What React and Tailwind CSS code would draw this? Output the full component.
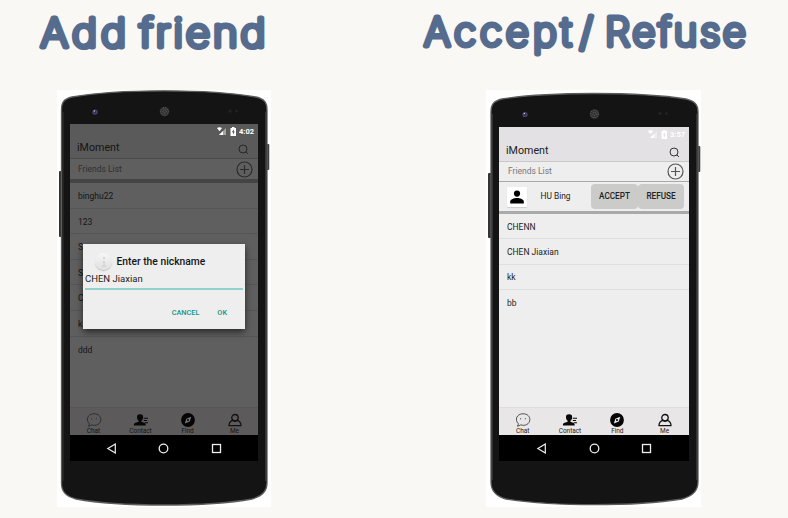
import React from "react";

function Heading({ words, y, width, label, stretch }) {
  return (
    <svg width={width} height="90" className="block overflow-visible" role="img" aria-label={label}>
      <text
        y={y}
        transform={`scale(${stretch} 1)`}
        className="fill-[#566c8f] stroke-[#566c8f] font-[Inter,sans-serif] font-extralight text-[39px]"
        strokeWidth="4.9"
        strokeLinejoin="round"
        strokeLinecap="round"
      >
        {words.map(([word, x, length]) => (
          <React.Fragment key={word}>
            <tspan x={x / stretch} textLength={length / stretch} lengthAdjust="spacing">{word}</tspan>{" "}
          </React.Fragment>
        ))}
      </text>
    </svg>
  );
}

function LeftBody() {
  return (
    <svg width="214" height="417" className="absolute inset-0">
      <rect x="2" y="81" width="4" height="66" rx="1" fill="#343434" />
      <rect x="209" y="54" width="3.3" height="26" rx="1" fill="#414141" />
      <path d="M4.5 20 C4.5 12 7 9 15 7 C40 2.500 75 .8 107 .8 C139 .8 174 2.500 199 7 C207 9 210 12 210 20 V393 C210 401 206 406 195 409 C170 413.500 140 415 107 415 C74 415 44 413.500 19 409 C8 406 4.500 401 4.500 393 Z" fill="#141414" stroke="#5c5c5c" strokeWidth="1.3" />
      <path d="M6 22 V391 M208.500 22 V391" stroke="#333" strokeWidth="1" />
      <Sensors dy={0} />
    </svg>
  );
}

function RightBody() {
  return (
    <svg width="215" height="417" className="absolute inset-0">
      <rect x="2" y="83" width="4" height="65" rx="1" fill="#343434" />
      <rect x="211" y="56" width="3.3" height="26" rx="1" fill="#414141" />
      <path d="M5 22 C5 14 8 11 16 9 C41 5 76 3.500 108 3.500 C140 3.500 175 5 200 9 C208 11 212 14 212 22 V392 C212 400 207 406 196 409 C171 413 141 414.700 108 414.700 C75 414.700 45 413 20 409 C9 406 5 400 5 392 Z" fill="#141414" stroke="#5c5c5c" strokeWidth="1.3" />
      <path d="M6.500 24 V390 M210.500 24 V390" stroke="#333" strokeWidth="1" />
      <Sensors dx={1} dy={2.5} />
    </svg>
  );
}

function Sensors({ dx = 0, dy }) {
  return (
    <g transform={`translate(${dx} ${dy})`}>
      <circle cx="38" cy="22" r="2.600" fill="#4c4c58" />
      <circle cx="38" cy="22" r="1.400" fill="#22229a" />
      <circle cx="37.400" cy="21" r=".7" fill="#ccd" />
      <circle cx="107.500" cy="21.500" r="4.800" fill="#303030" />
      <circle cx="107.500" cy="21.500" r="3.800" fill="none" stroke="#6c6c6c" strokeWidth="1" strokeDasharray="1 1.300" />
      <circle cx="107.500" cy="21.500" r="1.700" fill="none" stroke="#707070" strokeWidth="1" strokeDasharray="1 1" />
      <circle cx="173" cy="21" r="1.700" fill="#222" />
      <circle cx="179.500" cy="21" r="1.500" fill="#222" />
    </g>
  );
}

function StatusIcons() {
  return (
    <svg width="20" height="9" viewBox="0 0 20 9" fill="currentColor">
      <path d="M0 1 Q2.500 -.6 5 1 L2.500 4.200 Z" />
      <path d="M9 1 V8 H2 Z" opacity=".45" />
      <path d="M6 4 V8 H2 Z" />
      <path fillRule="evenodd" d="M13.500 1 H15 V0 H17.500 V1 H19 V9 H13.500 Z M16.800 2.200 L14.800 5.300 H16 V7.800 L17.800 4.500 H16.800 Z" />
    </svg>
  );
}

function SearchIcon() {
  return (
    <svg width="11" height="11" viewBox="0 0 11 11" fill="none" stroke="#202020" strokeWidth=".9">
      <circle cx="5" cy="5" r="4" />
      <path d="M7.800 7.800 L10 10" />
    </svg>
  );
}

function AddIcon({ color }) {
  return (
    <svg width="17" height="17" viewBox="0 0 17 17" fill="none" stroke={color} strokeWidth="1.200">
      <circle cx="8.500" cy="8.500" r="7.500" />
      <path d="M8.500 4 V13 M4 8.500 H13" />
    </svg>
  );
}

function ChatIcon() {
  return (
    <svg width="16" height="15" viewBox="0 0 16 15" fill="none" stroke="#222" strokeWidth=".8">
      <path d="M3 11.500 C-1 7.500 .8 1 8 .8 C13 .8 15.300 4 15.300 7 C15.300 12 10 14.300 5.500 12.700 C4.500 13.600 3 14.100 1.800 14 C2.800 13.200 3 12.500 3 11.500 Z" />
      <path d="M5 6.200 H6 M10 6.200 H11" strokeWidth="1" />
    </svg>
  );
}

function ContactIcon() {
  return (
    <svg width="16" height="15" viewBox="0 0 16 15" fill="#080808">
      <path d="M7 1.300 C9.600 1.300 10.400 2.700 10.300 4.500 C10.300 6.400 9.400 7.600 8.500 8.300 V9.300 L12 10.800 C13 11.300 13 12.300 13 13.500 H.4 C.4 12.300 .5 11.300 1.500 10.800 L5.500 9.300 V8.300 C4.500 7.600 3.700 6.400 3.700 4.500 C3.600 2.700 4.400 1.300 7 1.300 Z" />
      <path d="M11 5 H15.500 V6.100 H11 Z M11 7.600 H14.500 V8.700 H11 Z M12 10 H15.500 V11 H12 Z" />
    </svg>
  );
}

function FindIcon({ needle }) {
  return (
    <svg width="16" height="15" viewBox="0 0 16 15">
      <circle cx="8" cy="7.500" r="7.400" fill="#050505" />
      <path d="M11.500 4 L9.900 9.200 L4.600 11.200 L6.200 6.100 Z" fill={needle} />
      <circle cx="8" cy="7.600" r="1.200" fill="#111" />
    </svg>
  );
}

function MeIcon() {
  return (
    <svg width="16" height="15" viewBox="0 0 16 15" fill="none" stroke="#111" strokeWidth="1.300" strokeLinejoin="round">
      <circle cx="8" cy="4.700" r="3.200" />
      <path d="M5.500 7.300 C3 8.200 2 10 2 12.700 H14 C14 10 13 8.200 10.500 7.300 C9 8.500 7 8.500 5.500 7.300 Z" />
    </svg>
  );
}

function Tab({ icon, label, className = "" }) {
  return (
    <div className="flex w-[47.3px] flex-col items-center">
      {icon}
      <span className={`text-[6.5px] leading-[8px] tracking-[-0.05px] ${className}`}>{label}</span>
    </div>
  );
}

function TabBar({ needle, className }) {
  return (
    <div className={`flex h-[28px] shrink-0 border-t pt-[5px] ${className}`}>
      <Tab icon={<ChatIcon />} label="Chat" />
      <Tab icon={<ContactIcon />} label="Contact" />
      <Tab icon={<FindIcon needle={needle} />} label="Find" />
      <Tab icon={<MeIcon />} label="Me" className="-mt-px" />
    </div>
  );
}

function NavBar({ className }) {
  return (
    <div className={`flex h-[26px] shrink-0 items-center gap-[41.5px] bg-black ${className}`}>
      <svg width="11" height="11" viewBox="0 0 11 11" fill="none" stroke="#eee" strokeWidth="1.200">
        <path d="M9.300 1 V10 L1.800 5.500 Z" />
      </svg>
      <svg width="11" height="11" viewBox="0 0 11 11" fill="none" stroke="#eee" strokeWidth="1.300">
        <circle cx="5.500" cy="5.500" r="4.300" />
      </svg>
      <svg width="11" height="11" viewBox="0 0 11 11" fill="none" stroke="#eee" strokeWidth="1.300">
        <rect x="1.500" y="1.500" width="8" height="8" />
      </svg>
    </div>
  );
}

function AppBar({ time, className }) {
  return (
    <div className={`shrink-0 border-b ${className}`}>
      <div className="flex h-[14px] items-center justify-end pr-[4px] pt-px text-[7.5px] font-bold text-white">
        <StatusIcons />
        <span className="ml-[2px]">{time}</span>
      </div>
      <div className="flex h-[20px] items-center justify-between pl-[7px] pr-[9px]">
        <span className="text-[10.7px] leading-[20px]">iMoment</span>
        <span className="pt-[2px]"><SearchIcon /></span>
      </div>
    </div>
  );
}

function AddFriendPhone() {
  const names = ["binghu22", "123", "S", "S", "C", "k", "ddd"];
  return (
    <div className="relative ml-[57px] h-[417px] w-[214px] bg-white pl-[13px] pt-[34px]">
      <LeftBody />
      <div className="relative flex h-[337px] w-[188px] flex-col bg-[#5f5f5f] text-[#151515]">
        <AppBar time="4:02" className="h-[35px] border-[#4b4b4b] bg-[#5a5a5a]" />
        <div className="flex h-[24px] shrink-0 items-center justify-between border-b-4 border-[#444] pl-[8px] pr-[5px]">
          <span className="pt-px text-[8.5px] text-[#303030]">Friends List</span>
          <AddIcon color="#2c2c2c" />
        </div>
        <div className="grow">
          {names.map((name, i) => (
            <div key={i} className="flex h-[25.6px] items-center border-b border-[#565656] pl-[8px] pt-[2px] text-[8.5px] last:border-0">
              {name}
            </div>
          ))}
        </div>
        <TabBar needle="#777" className="border-[#565656] bg-[#5c5a5b]" />
        <NavBar className="pl-[35.5px]" />
        <div className="absolute left-[13px] top-[120px] h-[85px] w-[162px] bg-[#eee] px-[2px] shadow-[0_3px_7px_rgba(0,0,0,0.6)]">
          <div className="flex h-[26px] items-end pl-[10px]">
            <div className="flex size-[17px] shrink-0 items-center justify-center rounded-full bg-linear-to-b from-[#f6f6f6] to-[#e0e0e0] shadow-[0_1px_1px_rgba(0,0,0,0.2)]">
              <svg width="4" height="10" viewBox="0 0 4 10" fill="#d8d8d8">
                <path d="M1 0 H3 V2 H1 Z M0 4 H3 V8 H4 V10 H0 V8 H1 V5 H0 Z" />
              </svg>
            </div>
            <span className="ml-[4.5px] text-[10.3px] font-medium leading-[17px]">Enter the nickname</span>
          </div>
          <div className="h-[20px] border-b-2 border-[#8fd3cc] text-[9.5px] leading-[18px] text-[#222]">CHEN Jiaxian</div>
          <div className="flex h-[46px] items-center justify-end gap-[18px] pr-[16px] text-[7.3px] font-medium text-[#129486]">
            <span>CANCEL</span>
            <span>OK</span>
          </div>
        </div>
      </div>
    </div>
  );
}

function AcceptPhone() {
  const names = ["CHENN", "CHEN Jiaxian", "kk", "bb"];
  return (
    <div className="relative ml-[57px] h-[417px] w-[215px] bg-white pl-[13px] pt-[37px]">
      <RightBody />
      <div className="relative flex h-[334px] w-[190px] flex-col bg-[#eee] text-[#222]">
        <AppBar time="3:57" className="h-[35px] border-[#c8c8c8] bg-[#e3e1e4]" />
        <div className="flex h-[20px] shrink-0 items-center justify-between border-b border-[#aaa] pl-[9px] pr-[5px]">
          <span className="text-[8.5px] text-[#777]">Friends List</span>
          <AddIcon color="#555" />
        </div>
        <div className="flex h-[32px] shrink-0 items-center border-b-[3px] border-[#aaa] pl-[8px]">
          <div className="flex size-[20px] items-center justify-center rounded-[1px] bg-white shadow-[0_1px_1px_#ccc]">
            <svg width="14" height="14" viewBox="0 0 14 14">
              <circle cx="7" cy="3.600" r="3.100" />
              <path d="M.2 13.500 V11.500 C.2 9.500 4 8 7 8 C10 8 13.800 9.500 13.800 11.500 V13.500 Z" />
            </svg>
          </div>
          <span className="ml-[13.5px] w-[50.5px] text-[8.4px]">HU Bing</span>
          <span className="flex h-[25px] w-[47px] items-center justify-center rounded-[4px] bg-[#cbcbc9] text-[8.2px] font-medium">ACCEPT</span>
          <span className="flex h-[25px] w-[46px] items-center justify-center rounded-[4px] bg-[#cbcbc9] text-[8.2px] font-medium">REFUSE</span>
        </div>
        <div className="grow">
          {names.map((name) => (
            <div key={name} className="flex h-[25.3px] items-center border-b border-[#e0e0e0] pl-[8px] pt-[2px] text-[8.5px] last:border-0">
              {name}
            </div>
          ))}
        </div>
        <TabBar needle="#eee" className="border-[#ddd] bg-[#e9e6e8]" />
        <NavBar className="pl-[37px]" />
      </div>
    </div>
  );
}

export default function App() {
  return (
    <main className="flex h-[518px] w-[788px] overflow-hidden bg-[#faf8f4] font-[Roboto,sans-serif]">
      <section className="w-[429px]">
        <Heading label="Add friend" words={[["Add", 40.5, 85.5], ["friend", 139.5, 126]]} y={47.5} width={429} stretch={1.08} />
        <AddFriendPhone />
      </section>
      <section className="w-[359px]">
        <Heading label="Accept / Refuse" words={[["Accept", -5, 147.5], ["/", 150.5, 14]  , ["Refuse", 176, 141]]} y={46.2} width={359} stretch={1.03} />
        <AcceptPhone />
      </section>
    </main>
  );
}
